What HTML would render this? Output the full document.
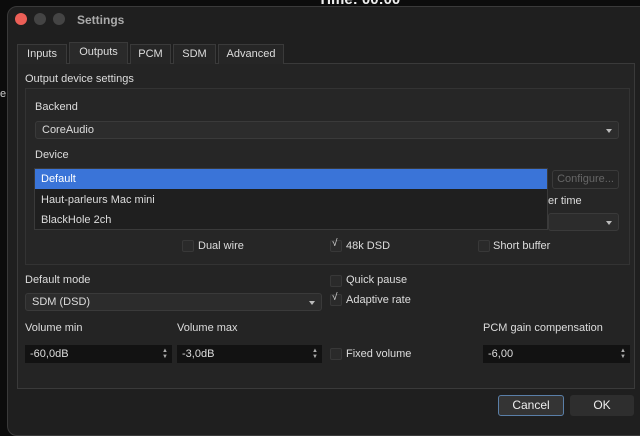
<!DOCTYPE html><html><head><style>
*{box-sizing:border-box;margin:0;padding:0}
body{width:640px;height:423px;background:#0c0c0c;font-family:"Liberation Sans",sans-serif;font-size:11px;color:#ddd;position:relative;overflow:hidden}
.a{position:absolute}
.win{left:7px;top:6px;width:645px;height:430px;background:#1f1f1f;border:1px solid #3a3a3a;border-radius:10px}
.dot{width:12px;height:12px;border-radius:50%;top:13px}
.tab{top:44px;height:20px;border:1px solid #3a3a3a;border-bottom:none;background:#262626;text-align:center;line-height:19px;color:#ddd}
.combo{height:18px;background:#2c2c2c;border:1px solid #3a3a3a;border-radius:3px;line-height:16px;padding-left:6px}
.arr{position:absolute;right:6px;top:7px;border-left:3px solid transparent;border-right:3px solid transparent;border-top:4px solid #bbb}
.cb{width:12px;height:12px;background:#2a2a2a;border:1px solid #383838;border-radius:2px}
.spin{height:18px;background:#121212;line-height:18px;padding-left:5px}
.sa{position:absolute;right:4px;top:3px;font-size:6px;line-height:6px;color:#aaa}
</style></head><body>
<div class="a" style="left:318px;top:-9px;font-size:15px;font-weight:bold;color:#eee">Time: 00:00</div>
<div class="a" style="left:0;top:88px;color:#ccc">e</div>
<div class="a win"></div>
<div class="a dot" style="left:15px;background:#ec5f57"></div>
<div class="a dot" style="left:34px;background:#444"></div>
<div class="a dot" style="left:53px;background:#444"></div>
<div class="a" style="left:77px;top:13px;font-size:12px;font-weight:bold;color:#aaa">Settings</div>
<div class="a" style="left:17px;top:63px;width:618px;height:326px;border:1px solid #3a3a3a;background:#242424"></div>
<div class="a tab" style="left:17px;width:50px">Inputs</div>
<div class="a tab" style="left:69px;width:59px;top:42px;height:22px;background:#2a2a2a">Outputs</div>
<div class="a tab" style="left:130px;width:41px">PCM</div>
<div class="a tab" style="left:173px;width:43px">SDM</div>
<div class="a tab" style="left:218px;width:66px">Advanced</div>
<div class="a" style="left:25px;top:73px">Output device settings</div>
<div class="a" style="left:25px;top:88px;width:605px;height:177px;border:1px solid #333;background:#262626"></div>
<div class="a" style="left:35px;top:101px">Backend</div>
<div class="a combo" style="left:35px;top:121px;width:584px">CoreAudio<div class="arr"></div></div>
<div class="a" style="left:35px;top:149px">Device</div>
<div class="a" style="left:552px;top:170px;width:67px;height:19px;border:1px solid #3a3a3a;border-radius:3px;color:#666;line-height:17px;text-align:center">Configure...</div>
<div class="a" style="left:548px;top:195px">er time</div>
<div class="a combo" style="left:548px;top:213px;width:71px"><div class="arr"></div></div>
<div class="a" style="left:34px;top:168px;width:514px;height:62px;background:#1f1f1f;border:1px solid #3a3a3a"></div>
<div class="a" style="left:35px;top:169px;width:512px;height:20px;background:#3a74d8;color:#fff;line-height:20px;padding-left:6px">Default</div>
<div class="a" style="left:41px;top:194px">Haut-parleurs Mac mini</div>
<div class="a" style="left:41px;top:214px">BlackHole 2ch</div>
<div class="a cb" style="left:182px;top:240px"></div><div class="a" style="left:198px;top:240px">Dual wire</div>
<div class="a cb" style="left:330px;top:240px"></div><div class="a" style="left:332px;top:238px;font-size:10px">√</div><div class="a" style="left:346px;top:240px">48k DSD</div>
<div class="a cb" style="left:478px;top:240px"></div><div class="a" style="left:493px;top:240px">Short buffer</div>
<div class="a" style="left:25px;top:274px">Default mode</div>
<div class="a combo" style="left:25px;top:293px;width:297px">SDM (DSD)<div class="arr"></div></div>
<div class="a cb" style="left:330px;top:275px"></div><div class="a" style="left:346px;top:274px">Quick pause</div>
<div class="a cb" style="left:330px;top:294px"></div><div class="a" style="left:332px;top:292px;font-size:10px">√</div><div class="a" style="left:346px;top:294px">Adaptive rate</div>
<div class="a" style="left:25px;top:322px">Volume min</div>
<div class="a" style="left:177px;top:322px">Volume max</div>
<div class="a" style="left:483px;top:322px">PCM gain compensation</div>
<div class="a spin" style="left:25px;top:345px;width:147px">-60,0dB<div class="sa">▲<br>▼</div></div>
<div class="a spin" style="left:177px;top:345px;width:145px">-3,0dB<div class="sa">▲<br>▼</div></div>
<div class="a cb" style="left:330px;top:348px"></div><div class="a" style="left:346px;top:348px">Fixed volume</div>
<div class="a spin" style="left:483px;top:345px;width:147px">-6,00<div class="sa">▲<br>▼</div></div>
<div class="a" style="left:498px;top:395px;width:66px;height:21px;border:1px solid #5a7fa8;border-radius:3px;background:#343434;text-align:center;line-height:19px;color:#eee;font-size:12px">Cancel</div>
<div class="a" style="left:570px;top:395px;width:64px;height:21px;border-radius:3px;background:#2e2e2e;text-align:center;line-height:21px;color:#eee;font-size:12px">OK</div>
</body></html>
